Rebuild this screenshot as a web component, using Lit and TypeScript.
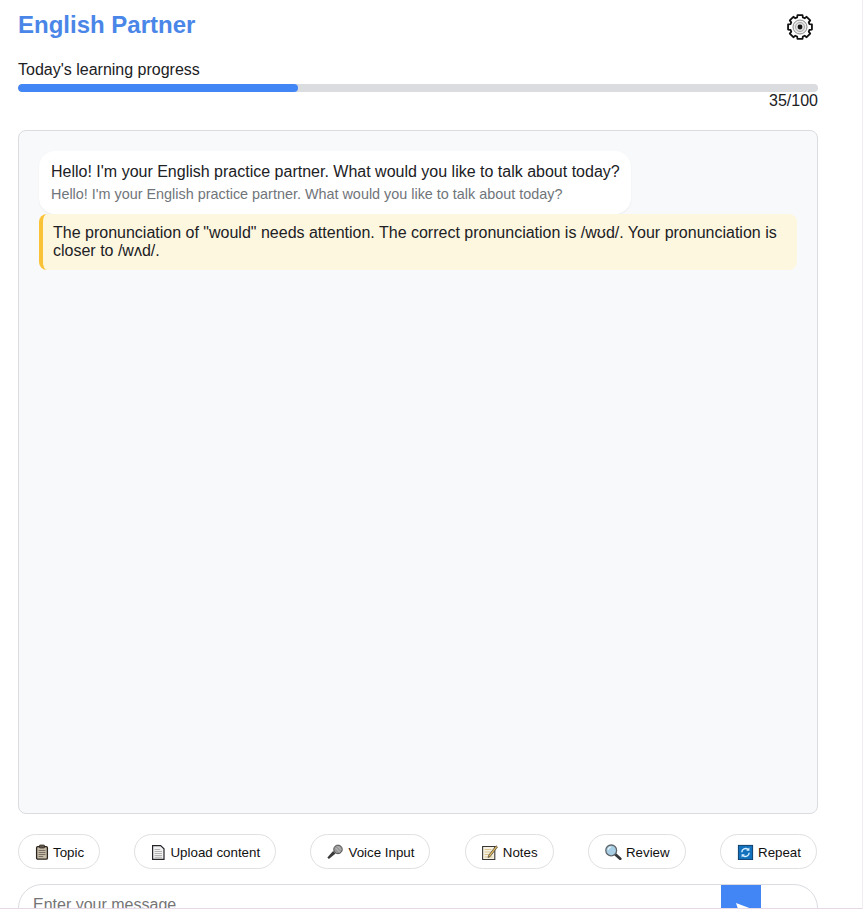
import { LitElement, html, css, svg } from "lit";
import { customElement } from "lit/decorators.js";

const tools = [
  {
    label: "Topic",
    width: 15,
    icon: svg`<rect x="2.6" y="3.6" width="10.8" height="12.6" rx="1.2" fill="#c6bba8" stroke="#2c241c" stroke-width="1.3"/><rect x="5.4" y="2" width="5.2" height="3" rx=".7" fill="#5f574c" stroke="#2c241c" stroke-width=".7"/><path d="M4.6 7.5h6.8M4.6 9.5h6.8M4.6 11.5h6.8M4.6 13.5h4.6" stroke="#6d655a" stroke-width=".9"/>`,
  },
  {
    label: "Upload content",
    width: 16,
    icon: svg`<path d="M2.6 2.6h8l3.4 3.2v10.6H2.6z" fill="#f1f1f1" stroke="#24242a" stroke-width="1.2"/><path d="M4.6 6.5h5.6M4.6 8.5h7.4M4.6 10.5h7.4M4.6 12.5h7.4M4.6 14.3h7.4" stroke="#a3a3a3" stroke-width=".8"/>`,
  },
  {
    label: "Voice Input",
    width: 18,
    icon: svg`<path d="M1.4 14.6l1.5 1.5 6.7-5.7-2.5-2.5z" fill="#3a3a3a"/><circle cx="12" cy="6.4" r="4.3" fill="#979797" stroke="#3c3c3c" stroke-width=".8"/><path d="M9.4 4.8l4.2 4.2M11.6 3.2l3.6 3.6" stroke="#cdcdcd" stroke-width=".8"/>`,
  },
  {
    label: "Notes",
    width: 18,
    icon: svg`<path d="M1.6 3.5h12.2v13H1.6z" fill="#f5f0e2" stroke="#3a3836" stroke-width="1.1"/><path d="M3.6 6.5h6.6M3.6 9h6.6M3.6 11.5h6.6M3.6 14h8" stroke="#d9c68e" stroke-width="1"/><path d="M7.6 12.4l7.4-9.6 1.5 1.2-7.4 9.6-2 .8z" fill="#e4b958" stroke="#3a3836" stroke-width=".7"/>`,
  },
  {
    label: "Review",
    width: 18,
    icon: svg`<path d="M11.2 11.2l5 4.6" stroke="#34373a" stroke-width="2.8" stroke-linecap="round"/><circle cx="7.2" cy="7.4" r="5.4" fill="#a8cee6" stroke="#5f666b" stroke-width="1.3"/><path d="M4 6.9a3.5 3.5 0 0 1 2.8-2.8" stroke="#e8f5fc" stroke-width="1.1" fill="none"/>`,
  },
  {
    label: "Repeat",
    width: 18,
    icon: svg`<rect x="2.4" y="2.4" width="14.2" height="14.2" fill="#1272bd" stroke="#0d3d6e" stroke-width="1"/><path d="M5.8 9.2a3.8 3.8 0 0 1 6.2-2.8M13.2 9.8a3.8 3.8 0 0 1-6.2 2.8" fill="none" stroke="#d8f0ff" stroke-width="1.4"/><path d="M13.4 4.6v3.2h-3.2zM5.6 14.4v-3.2h3.2z" fill="#d8f0ff"/>`,
  },
];

const greeting = "Hello! I'm your English practice partner. What would you like to talk about today?";

function gearPath(): string {
  const teeth = 8;
  const outer = 12.2;
  const root = 9.9;
  const cx = 15;
  const cy = 15;
  const pts: string[] = [];
  for (let i = 0; i < teeth; i++) {
    const a = (i * 360) / teeth - 90;
    const steps: [number, number][] = [
      [a - 17, root],
      [a - 12, outer],
      [a + 12, outer],
      [a + 17, root],
    ];
    for (const [deg, r] of steps) {
      const rad = (deg * Math.PI) / 180;
      pts.push(`${(cx + r * Math.cos(rad)).toFixed(2)} ${(cy + r * Math.sin(rad)).toFixed(2)}`);
    }
  }
  return `M${pts.join("L")}Z`;
}

@customElement("app-root")
export class AppRoot extends LitElement {
  static styles = css`
    :host {
      display: block;
      height: 909px;
      overflow: hidden;
      box-sizing: border-box;
      background: #fff;
      border-right: 1px solid #f1edf2;
      border-bottom: 1px solid #e6d8e6;
      font-family: "Liberation Sans", Arial, sans-serif;
      color: #202124;
    }
    .page {
      width: 800px;
      margin-left: 18px;
      display: flex;
      flex-direction: column;
    }
    .header {
      height: 50px;
      display: flex;
      justify-content: space-between;
      align-items: flex-start;
    }
    h1 {
      margin: 10px 0 0;
      font-size: 24px;
      line-height: 29px;
      font-weight: 700;
      color: #4a86e8;
    }
    .gear {
      width: 30px;
      height: 30px;
      margin: 12px 3px 0 0;
      display: block;
    }
    .progress-label {
      font-size: 16px;
      line-height: 18px;
      margin-top: 11px;
    }
    .track {
      height: 8px;
      margin-top: 5px;
      border-radius: 4px;
      background: #dadce0;
      overflow: hidden;
    }
    .fill {
      height: 100%;
      border-radius: 4px;
      background: #4285f4;
    }
    .count {
      font-size: 16px;
      line-height: 18px;
      text-align: right;
    }
    .chat {
      box-sizing: border-box;
      height: 684px;
      margin-top: 20px;
      padding: 20px;
      background: #f8f9fa;
      border: 1px solid #dadce0;
      border-radius: 8px;
    }
    .bubble {
      width: fit-content;
      box-sizing: border-box;
      padding: 11px 11px 11px 12px;
      background: #fff;
      border-radius: 16px;
      box-shadow: 0 1px 2px rgba(0, 0, 0, 0.06);
    }
    .msg {
      font-size: 16px;
      line-height: 20px;
    }
    .trans {
      margin-top: 3px;
      font-size: 14.4px;
      line-height: 18px;
      color: #70757a;
    }
    .feedback {
      box-sizing: border-box;
      padding: 10px;
      border-left: 4px solid #fac337;
      border-radius: 8px;
      background: #fef7e0;
      font-size: 16px;
      line-height: 18px;
    }
    .tools {
      display: flex;
      justify-content: space-between;
      margin-top: 20px;
      padding-right: 1px;
    }
    .tool {
      box-sizing: border-box;
      height: 35px;
      display: flex;
      align-items: center;
      gap: 4px;
      padding: 0 15px;
      background: #fff;
      border: 1px solid #e0e0e0;
      border-radius: 18px;
      font-size: 13.333px;
      color: #111;
      white-space: nowrap;
    }
    .tool span {
      padding-top: 2px;
    }
    .tool svg {
      height: 17px;
      display: block;
      flex: none;
    }
    .composer {
      box-sizing: border-box;
      height: 50px;
      margin-top: 15px;
      display: flex;
      border: 1px solid #dadce0;
      border-radius: 24px;
      overflow: hidden;
    }
    .placeholder {
      flex: 1;
      padding: 11px 14px;
      font-size: 16px;
      line-height: 18px;
      color: #757575;
    }
    .send {
      width: 40px;
      margin-right: 56px;
      background: #4285f4;
      display: flex;
      justify-content: center;
      padding: 17px 0 0 6px;
      box-sizing: border-box;
    }
    .send svg {
      width: 18px;
      height: 14px;
      display: block;
    }
  `;

  render() {
    return html`
      <div class="page">
        <header class="header">
          <h1>English Partner</h1>
          <svg class="gear" viewBox="0 0 30 30">
            <path d=${gearPath()} fill="#fff" stroke="#111" stroke-width="1.8" stroke-linejoin="round"/>
            <circle cx="15" cy="15" r="7" fill="#ececec" stroke="#8a8a8a" stroke-width="1"/>
            <circle cx="15" cy="15" r="4.6" fill="#dcdcdc" stroke="#a0a0a0" stroke-width=".8"/>
            <circle cx="15" cy="15" r="2.4" fill="#111"/>
          </svg>
        </header>
        <div class="progress-label">Today's learning progress</div>
        <div class="track"><div class="fill" style="width: 35%"></div></div>
        <div class="count">35/100</div>
        <section class="chat">
          <div class="bubble">
            <div class="msg">${greeting}</div>
            <div class="trans">${greeting}</div>
          </div>
          <div class="feedback">The pronunciation of "would" needs attention. The correct pronunciation is /wʊd/. Your pronunciation is closer to /wʌd/.</div>
        </section>
        <div class="tools">
          ${tools.map(
            (t) => html`<div class="tool"><svg style="width: ${t.width}px" viewBox="0 0 ${t.width} 17">${t.icon}</svg><span>${t.label}</span></div>`
          )}
        </div>
        <div class="composer">
          <div class="placeholder">Enter your message</div>
          <div class="send"><svg viewBox="0 0 18 14"><path d="M1 1l16 6-16 6 2-6z" fill="#fff"/></svg></div>
        </div>
      </div>
    `;
  }
}
